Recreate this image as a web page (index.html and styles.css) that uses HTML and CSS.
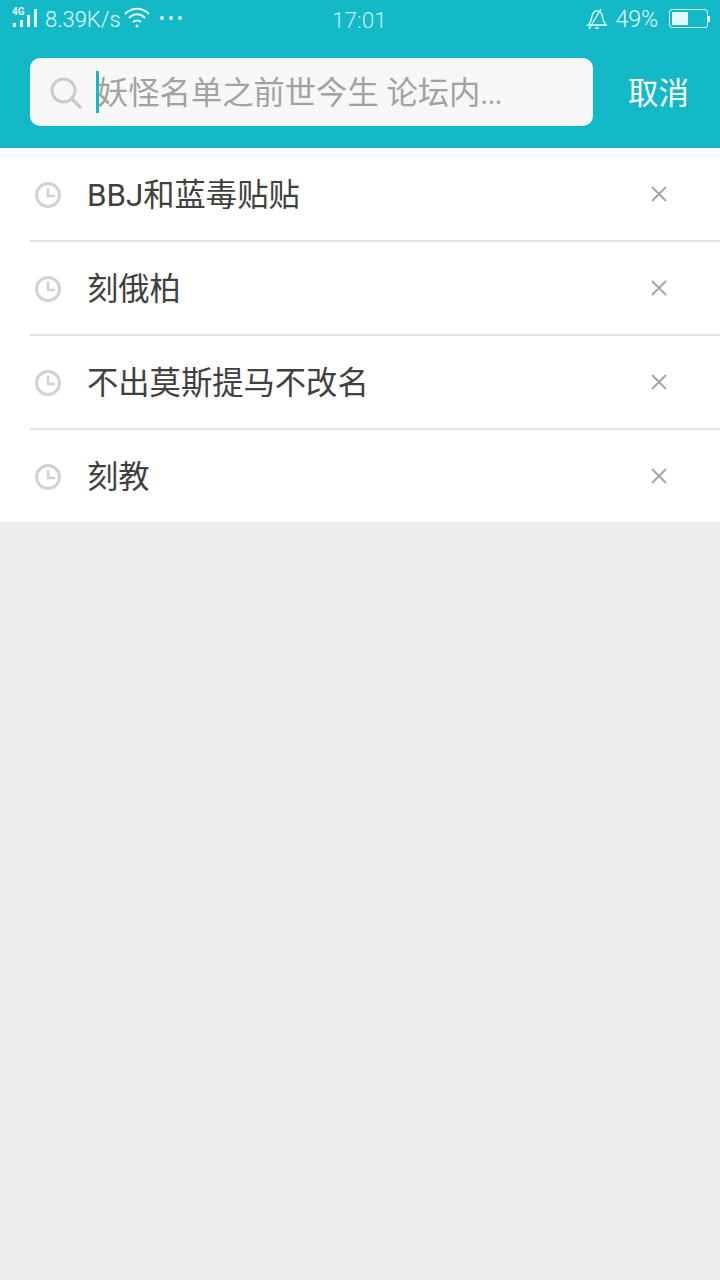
FILE: index.html
```html
<!DOCTYPE html>
<html lang="zh-CN">
<head>
    <meta charset="UTF-8">
    <meta name="viewport" content="width=device-width, initial-scale=1.0">
    <title>搜索</title>
    <link rel="stylesheet" href="styles.css">
</head>
<body>
    <div class="header">
        <div class="status">
            <div class="status-left">
                <span class="net-wrap">
                    <span class="net-label">4G</span>
                    <svg class="signal" width="28" height="20" viewBox="0 0 28 20">
                        <rect x="1" y="15" width="3" height="4" fill="#e4f7f9"/>
                        <rect x="8" y="12" width="3" height="7" fill="#e4f7f9"/>
                        <rect x="15" y="7" width="3" height="12" fill="#e4f7f9"/>
                        <rect x="22" y="1" width="3" height="18" fill="#e4f7f9"/>
                    </svg>
                </span>
                <span class="speed">8.39K/s</span>
                <svg class="wifi" width="26" height="22" viewBox="0 0 26 22" fill="none" stroke="#e4f7f9" stroke-width="2">
                    <path d="M1 7 C8 0 18 0 25 7"/>
                    <path d="M5 11 C10 6 16 6 21 11"/>
                    <path d="M9 15 C11 13 15 13 17 15"/>
                    <circle cx="13" cy="19" r="1.6" fill="#e4f7f9" stroke="none"/>
                </svg>
                <span class="dots"><i></i><i></i><i></i></span>
            </div>
            <span class="clock">17:01</span>
            <div class="status-right">
                <svg class="bell" width="22" height="22" viewBox="0 0 22 22" fill="none" stroke="#e4f7f9" stroke-width="1.4">
                    <path d="M2 17 C5 15 5 12 6 8 C7 4 9 3 11 3 C14 3 16 5 16.500 9 C17 13 18 15 20 17 Z"/>
                    <path d="M9 20 L13 20"/>
                    <path d="M3 21 L15 1"/>
                </svg>
                <span class="pct">49%</span>
                <span class="battery"><span class="battery-fill"></span></span>
                <span class="battery-tip"></span>
            </div>
        </div>
        <div class="search-row">
            <div class="search-box">
                <svg class="search-icon" width="34" height="34" viewBox="0 0 34 34" fill="none" stroke="#cbcbcb" stroke-width="3">
                    <circle cx="14.500" cy="14.500" r="11.500"/>
                    <path d="M23 23 L31 31" stroke-linecap="round" stroke-width="3.500"/>
                </svg>
                <span class="caret"></span>
                <span class="placeholder">妖怪名单之前世今生 论坛内<span class="more">...</span></span>
            </div>
            <span class="cancel">取消</span>
        </div>
    </div>

    <ul class="history">
        <li class="row">
            <svg class="clock-icon" width="28" height="28" viewBox="0 0 28 28" fill="none" stroke="#d2d2d2" stroke-width="3">
                <circle cx="14" cy="14" r="11.500"/>
                <path d="M14 7 V15 H21" stroke-width="2.500"/>
            </svg>
            <span class="term">BBJ和蓝毒贴贴</span>
            <svg class="close" width="18" height="18" viewBox="0 0 18 18" stroke="#a6a6a6" stroke-width="2"><path d="M2 2 L16 16 M16 2 L2 16"/></svg>
        </li>
        <li class="row">
            <svg class="clock-icon" width="28" height="28" viewBox="0 0 28 28" fill="none" stroke="#d2d2d2" stroke-width="3">
                <circle cx="14" cy="14" r="11.500"/>
                <path d="M14 7 V15 H21" stroke-width="2.500"/>
            </svg>
            <span class="term">刻俄柏</span>
            <svg class="close" width="18" height="18" viewBox="0 0 18 18" stroke="#a6a6a6" stroke-width="2"><path d="M2 2 L16 16 M16 2 L2 16"/></svg>
        </li>
        <li class="row">
            <svg class="clock-icon" width="28" height="28" viewBox="0 0 28 28" fill="none" stroke="#d2d2d2" stroke-width="3">
                <circle cx="14" cy="14" r="11.500"/>
                <path d="M14 7 V15 H21" stroke-width="2.500"/>
            </svg>
            <span class="term">不出莫斯提马不改名</span>
            <svg class="close" width="18" height="18" viewBox="0 0 18 18" stroke="#a6a6a6" stroke-width="2"><path d="M2 2 L16 16 M16 2 L2 16"/></svg>
        </li>
        <li class="row">
            <svg class="clock-icon" width="28" height="28" viewBox="0 0 28 28" fill="none" stroke="#d2d2d2" stroke-width="3">
                <circle cx="14" cy="14" r="11.500"/>
                <path d="M14 7 V15 H21" stroke-width="2.500"/>
            </svg>
            <span class="term">刻教</span>
            <svg class="close" width="18" height="18" viewBox="0 0 18 18" stroke="#a6a6a6" stroke-width="2"><path d="M2 2 L16 16 M16 2 L2 16"/></svg>
        </li>
    </ul>
</body>
</html>
```

FILE: styles.css
```css
html, body {
    margin: 0;
    padding: 0;
}
body {
    width: 720px;
    height: 1280px;
    overflow: hidden;
    background-color: #eeeeee;
    font-family: Roboto, 'Noto Sans CJK SC', sans-serif;
    color: #333;
}
.header {
    height: 148px;
    background-color: #14b9c8;
}
.status {
    height: 40px;
    display: flex;
    align-items: center;
    justify-content: space-between;
    position: relative;
    padding: 0 12px;
    box-sizing: border-box;
    color: #e4f7f9;
    font-size: 22.500px;
    font-weight: 300;
}
.status-left, .status-right {
    display: flex;
    align-items: center;
}
.net-wrap {
    position: relative;
    display: block;
    width: 28px;
    height: 20px;
    margin-top: -4px;
}
.net-label {
    position: absolute;
    left: 0;
    top: -2px;
    font-size: 10px;
    font-weight: 700;
    line-height: 12px;
}
.signal {
    display: block;
}
.speed {
    margin-left: 5px;
    margin-top: -2px;
    font-size: 22px;
}
.wifi {
    margin-left: 3px;
    margin-top: -4px;
}
.dots {
    display: flex;
    gap: 5px;
    margin-left: 10px;
    margin-top: -4px;
}
.dots i {
    width: 4px;
    height: 4px;
    border-radius: 50%;
    background-color: #e4f7f9;
}
.clock {
    position: absolute;
    left: 332px;
    top: 6px;
    color: #c8eef2;
    line-height: 28px;
}
.status-right {
    margin-right: -2px;
}
.bell {
    margin-right: 1px;
    margin-top: -2px;
}
.pct {
    margin-left: 6px;
    margin-top: -2px;
    font-size: 23px;
}
.battery {
    display: block;
    width: 33px;
    height: 13px;
    margin-left: 11px;
    margin-top: -3px;
    padding: 2px;
    border: 1px solid #e4f7f9;
    border-radius: 3px;
}
.battery-fill {
    display: block;
    width: 16px;
    height: 13px;
    background-color: #e4f7f9;
    border-radius: 1px;
}
.battery-tip {
    width: 2px;
    height: 6px;
    margin-top: -3px;
    background-color: #e4f7f9;
}
.search-row {
    display: flex;
    align-items: center;
    margin-top: 18px;
    padding-left: 30px;
}
.search-box {
    width: 563px;
    height: 68px;
    display: flex;
    align-items: center;
    background-color: #f7f7f7;
    border-radius: 10px;
}
.search-icon {
    margin-left: 19px;
    margin-top: 2px;
}
.caret {
    width: 3px;
    height: 42px;
    margin-left: 13px;
    background-color: #14b9c8;
}
.placeholder {
    margin-left: -2px;
    margin-bottom: 4px;
    font-size: 31.300px;
    color: #a2a2a2;
    white-space: nowrap;
}
.more {
    letter-spacing: -1.200px;
}
.cancel {
    margin-left: 35px;
    margin-bottom: 2px;
    font-size: 30.500px;
    color: #fff;
}
.history {
    list-style: none;
    margin: 0;
    padding: 0 0 0 30px;
    background-color: #fff;
}
.row {
    height: 92px;
    display: flex;
    align-items: center;
    border-bottom: 2px solid #e4e4e4;
}
.row:last-child {
    border-bottom: none;
}
.clock-icon {
    margin-left: 4px;
    margin-top: 2px;
}
.term {
    flex: 1;
    margin-left: 25px;
    margin-bottom: 4px;
    font-size: 31.300px;
    color: #404040;
}
.close {
    margin-right: 52px;
}
```
